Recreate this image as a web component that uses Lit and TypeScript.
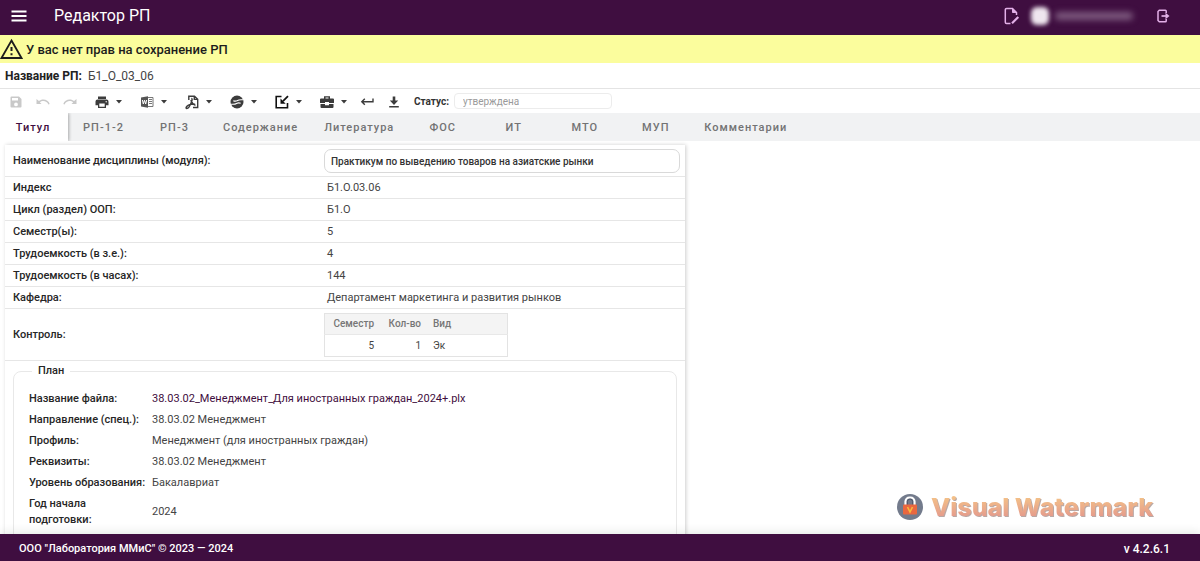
import { LitElement, html, css, svg, nothing, TemplateResult } from "lit";
import { customElement, property } from "lit/decorators.js";
import { classMap } from "lit/directives/class-map.js";

interface Tool {
  label: string;
  icon: TemplateResult;
  menu?: boolean;
  disabled?: boolean;
}

const tools: Tool[] = [
  {
    label: "Сохранить",
    disabled: true,
    icon: svg`<path fill="currentColor" fill-rule="evenodd" d="M3.500 2.500h7.500l2.500 2.500v7.500a1 1 0 0 1-1 1h-9a1 1 0 0 1-1-1v-9a1 1 0 0 1 1-1zM4 4v2.500h6V4zM8 8.500a1.900 1.900 0 1 0 0 3.800 1.900 1.900 0 0 0 0-3.800z"/>`,
  },
  {
    label: "Отменить",
    disabled: true,
    icon: svg`<path fill="currentColor" d="M1.500 5v5h5L4.800 8.200C5.800 7.300 7.100 6.900 8.300 6.900c2.300 0 4.300 1.300 5.100 3.500l1.300-.4C13.800 7.200 11.300 5.500 8.300 5.500c-1.700 0-3.200.6-4.400 1.600z"/>`,
  },
  {
    label: "Повторить",
    disabled: true,
    icon: svg`<path fill="currentColor" d="M14.500 5v5h-5l1.700-1.800C10.200 7.300 8.900 6.900 7.700 6.900c-2.300 0-4.300 1.300-5.100 3.500L1.300 10C2.200 7.200 4.700 5.500 7.700 5.500c1.700 0 3.200.6 4.400 1.600z"/>`,
  },
  {
    label: "Печать",
    menu: true,
    icon: svg`<path fill="currentColor" fill-rule="evenodd" d="M4 2.500h8v2.500H4zM3.500 5.500h9a2 2 0 0 1 2 2v3.800H12v2.700H4v-2.700H1.500V7.500a2 2 0 0 1 2-2zM5.300 9.500v3.200h5.400V9.500zM12.200 7a.7.7 0 1 0 0 1.400.7.700 0 0 0 0-1.400z"/>`,
  },
  {
    label: "Word",
    menu: true,
    icon: svg`<path fill="#555" d="M2 3.500 9 2.200v11.600L2 12.500z"/><path fill="none" stroke="#777" d="M9 3.500h5v9H9M10 5.500h3M10 7.500h3M10 9.500h3"/><path fill="none" stroke="#fff" d="m3.400 6 .9 4 1.200-3.800 1.200 3.800.9-4"/>`,
  },
  {
    label: "PDF",
    menu: true,
    icon: svg`<path fill="none" stroke="currentColor" stroke-width="1.400" d="M4.800 6V2.200h5.700l3.200 3v8.300H9M10.300 2.200v3.200h3.400"/><path fill="none" stroke="currentColor" stroke-width="1.500" d="M7.300 4.500c1.200 0 .8 2 .1 3.700C6.500 10.500 4.500 14.500 2.800 14.500c-1.500 0-.3-2.400 1.700-3.400 2-.9 4.700-1.400 6.500-.9M7 6c.5 2.500 2 4.300 4.500 5.300"/>`,
  },
  {
    label: "Портал",
    menu: true,
    icon: svg`<circle cx="8" cy="8" r="6.500" fill="currentColor"/><path fill="none" stroke="#fff" stroke-width="1.100" d="M14.500 5.700h-2.300c-2 0-3.200.5-4.300 1.100-1.200.6-2.400.4-3.600-.1M1.500 10.300h2.300c2 0 3.200-.5 4.300-1.100 1.200-.6 2.400-.4 3.600.1"/>`,
  },
  {
    label: "Импорт",
    menu: true,
    icon: svg`<path fill="none" stroke="#111" stroke-width="1.600" d="M7.500 2.500H2.200v11.300h11.300V9"/><path fill="none" stroke="#111" stroke-width="1.800" d="m14 2.200-5 5"/><path fill="#111" d="M6.500 4.600v5.200h5.200z"/>`,
  },
  {
    label: "Инструменты",
    menu: true,
    icon: svg`<path fill="currentColor" fill-rule="evenodd" d="M5 4.500v-2.300h6v2.300h3a1 1 0 0 1 1 1V9h-5V8H6v1H1V5.500a1 1 0 0 1 1-1zM6.500 3.600v.9h3v-.9zM1.500 10H6v1.200h4V10h4.500v3a1 1 0 0 1-1 1h-11a1 1 0 0 1-1-1z"/>`,
  },
  {
    label: "Вернуть",
    icon: svg`<path fill="none" stroke="currentColor" stroke-width="1.400" d="M14 4.500v3.200H3M5.800 4.700l-3 3 3 3"/>`,
  },
  {
    label: "Скачать",
    icon: svg`<path fill="currentColor" d="M6.700 2.500h2.600v4h2.900L8 10.900 3.800 6.500h2.900zM3.200 12h9.600v1.500H3.200z"/>`,
  },
];

const tabs = [
  "Титул", "РП-1-2", "РП-3", "Содержание", "Литература",
  "ФОС", "ИТ", "МТО", "МУП", "Комментарии",
];

const fields: [string, string][] = [
  ["Индекс", "Б1.О.03.06"],
  ["Цикл (раздел) ООП:", "Б1.О"],
  ["Семестр(ы):", "5"],
  ["Трудоемкость (в з.е.):", "4"],
  ["Трудоемкость (в часах):", "144"],
  ["Кафедра:", "Департамент маркетинга и развития рынков"],
];

const plan: [string, string][] = [
  ["Название файла:", "38.03.02_Менеджмент_Для иностранных граждан_2024+.plx"],
  ["Направление (спец.):", "38.03.02 Менеджмент"],
  ["Профиль:", "Менеджмент (для иностранных граждан)"],
  ["Реквизиты:", "38.03.02 Менеджмент"],
  ["Уровень образования:", "Бакалавриат"],
  ["Год начала подготовки:", "2024"],
];

@customElement("rp-header")
class RpHeader extends LitElement {
  static styles = css`
    :host {
      display: flex;
      align-items: center;
      height: 35px;
      flex: none;
      padding: 0 23px 3px 5px;
      box-sizing: border-box;
      background: #3f0e40;
      color: #fff;
    }
    .icon-button {
      display: flex;
      justify-content: center;
      width: 28px;
      padding: 0;
      border: 0;
      background: none;
      color: #fff;
    }
    .pink {
      color: #e3b0e8;
    }
    .title {
      margin: 0 auto 0 21px;
      font-size: 16px;
      font-weight: 400;
      line-height: 20px;
    }
    .user {
      display: flex;
      align-items: center;
      gap: 6px;
      margin: 0 16px 0 5px;
    }
    .avatar {
      width: 18px;
      height: 18px;
      border-radius: 6px;
      background: #efe6ef;
      filter: blur(2px);
    }
    .login {
      width: 78px;
      height: 8px;
      border-radius: 4px;
      background: #7d5a7e;
      filter: blur(3px);
    }
  `;
  render() {
    return html`
      <button class="icon-button" aria-label="Меню">
        <svg width="18" height="16" viewBox="0 0 18 16">
          <path stroke="currentColor" stroke-width="1.800" d="M1.500 3.500h15M1.500 8h15M1.500 12.500h15" />
        </svg>
      </button>
      <h1 class="title">Редактор РП</h1>
      <button class="icon-button pink" aria-label="Редактировать">
        <svg width="18" height="20" viewBox="0 0 18 20" fill="none" stroke="currentColor">
          <path stroke-width="1.500" d="M7.500 17.500H3.500a1.200 1.200 0 0 1-1.200-1.200V3.700a1.200 1.200 0 0 1 1.200-1.200H9.500l4 4V9" />
          <path fill="currentColor" d="M9.500 2.500v4h4z" />
          <path stroke-width="2.200" d="m9 17.200 6.300-6.200" />
        </svg>
      </button>
      <span class="user"><span class="avatar"></span><span class="login"></span></span>
      <button class="icon-button pink" aria-label="Выход">
        <svg width="16" height="16" viewBox="0 0 16 16" fill="none" stroke="currentColor">
          <path stroke-width="1.500" d="M11.200 5V3a.8.8 0 0 0-.8-.8H4.300L3 3.500v9l1.300 1.300h6.100a.8.8 0 0 0 .8-.8v-2" />
          <path stroke-width="1.700" d="M6.500 8h5" />
          <path fill="currentColor" stroke="none" d="M10.500 4.800 14.500 8l-4 3.200z" />
        </svg>
      </button>
    `;
  }
}

@customElement("rp-toolbar")
class RpToolbar extends LitElement {
  static styles = css`
    :host {
      display: flex;
      align-items: center;
      flex: none;
      height: 25px;
      padding-left: 4px;
      box-sizing: border-box;
      border-top: 1px solid #e4e4e4;
      font-size: 10px;
    }
    .tool {
      display: flex;
      align-items: center;
      gap: 6px;
      width: 27px;
      height: 24px;
      padding: 2px 0 0 4px;
      box-sizing: border-box;
      border: 0;
      background: none;
      color: #3c3c3c;
    }
    .tool.menu {
      width: 45px;
      padding-left: 9px;
    }
    .tool:disabled {
      color: #c9c9c9;
    }
    .glyph {
      flex: none;
    }
    .status-label {
      margin: 0 5px 0 5px;
      color: #333;
      font-weight: 700;
    }
    .status {
      width: 158px;
      height: 16px;
      padding: 1px 8px 0;
      box-sizing: border-box;
      border: 1px solid #ececec;
      border-radius: 4px;
      background: #fff;
      color: #9a9a9a;
      font: 10px/13px Roboto, sans-serif;
    }
  `;
  render() {
    return html`
      ${tools.map(
        (t) => html`<button
          class=${classMap({ tool: true, menu: !!t.menu })}
          aria-label=${t.label}
          ?disabled=${!!t.disabled}
        >
          <svg class="glyph" width="16" height="16" viewBox="0 0 16 16">${t.icon}</svg>
          ${t.menu
            ? html`<svg class="glyph" width="6" height="4" viewBox="0 0 6 4">
                <path fill="currentColor" d="M0 0h6L3 3.500z" />
              </svg>`
            : nothing}
        </button>`
      )}
      <label class="status-label" for="status">Статус:</label>
      <input class="status" id="status" value="утверждена" disabled />
    `;
  }
}

@customElement("rp-tabs")
class RpTabs extends LitElement {
  @property({ type: Number }) active = 0;
  static styles = css`
    :host {
      display: flex;
      flex: none;
      height: 28px;
      background: #f1f2f3;
    }
    .tab {
      min-width: 71px;
      padding: 1px 13px 0;
      border: 0;
      background: none;
      color: #737373;
      font: 500 11px/27px Roboto, sans-serif;
      letter-spacing: 1px;
    }
    .tab.active {
      min-width: 68px;
      padding-right: 15px;
      background: #fff;
      color: #3f0e40;
      box-shadow: 1px 0 3px rgba(0, 0, 0, 0.3);
      clip-path: inset(0 -4px 0 0);
    }
  `;
  render() {
    return tabs.map(
      (t, i) => html`<button
        role="tab"
        class=${classMap({ tab: true, active: i === this.active })}
        aria-selected=${i === this.active}
        @click=${() => (this.active = i)}
      >${t}</button>`
    );
  }
}

@customElement("rp-title-card")
class RpTitleCard extends LitElement {
  static styles = css`
    :host {
      display: block;
      width: 680px;
      max-width: calc(100% - 10px);
      margin: 4px 0 0 5px;
      box-sizing: border-box;
      background: #fff;
      box-shadow: 1px 0 4px rgba(0, 0, 0, 0.2);
      color: #444;
      font-size: 11px;
      line-height: 16px;
    }
    .row {
      display: grid;
      grid-template-columns: 311px minmax(0, 1fr);
      align-items: center;
      min-height: 22px;
      padding: 0 5px 0 8px;
      box-sizing: border-box;
      border-bottom: 1px solid #e6e6e6;
    }
    .row.tall {
      padding-top: 4px;
      padding-bottom: 3px;
    }
    .name {
      color: #262626;
      font-weight: 500;
    }
    .value {
      padding-left: 3px;
    }
    .discipline {
      width: 100%;
      height: 24px;
      padding: 0 6px;
      box-sizing: border-box;
      border: 1px solid #d9d9d9;
      border-radius: 7px;
      background: #fff;
      color: #333;
      font: 500 10px Roboto, sans-serif;
    }
    .control {
      width: 184px;
      border: 1px solid #e3e3e3;
      border-collapse: collapse;
      table-layout: fixed;
      font-size: 10px;
    }
    .control th,
    .control td {
      height: 20px;
      padding: 0 6px 0 6px;
      font-weight: 400;
      text-align: left;
    }
    .control td {
      height: 21px;
    }
    .control .head {
      background: #f4f4f4;
      color: #777;
      border-bottom: 1px solid #e8e8e8;
    }
    .control .head th {
      font-weight: 500;
    }
    .control .semester {
      width: 43px;
    }
    .control .count {
      width: 35px;
    }
    .control .num {
      text-align: right;
    }
    .plan {
      margin: 2px 8px 0;
      min-width: 0;
      padding: 12px 15px 24px;
      border: 1px solid #e8e8e8;
      border-radius: 8px;
    }
    .legend {
      margin-left: 3px;
      padding: 0 6px;
      color: #262626;
      font-weight: 500;
    }
    .items {
      display: grid;
      grid-template-columns: 118px minmax(0, 1fr);
      column-gap: 5px;
      row-gap: 5px;
      align-items: center;
      margin: 0;
    }
    .items dd {
      margin: 0;
    }
    .link {
      color: #3f0e40;
      text-decoration: none;
    }
  `;
  render() {
    return html`
      <div class="row tall">
        <label class="name" for="discipline">Наименование дисциплины (модуля):</label>
        <input class="discipline" id="discipline" value="Практикум по выведению товаров на азиатские рынки" />
      </div>
      ${fields.map(
        ([name, value]) => html`<div class="row">
          <span class="name">${name}</span><span class="value">${value}</span>
        </div>`
      )}
      <div class="row tall">
        <span class="name">Контроль:</span>
        <table class="control">
          <tr class="head"><th class="num semester">Семестр</th><th class="num count">Кол-во</th><th>Вид</th></tr>
          <tr><td class="num">5</td><td class="num">1</td><td>Эк</td></tr>
        </table>
      </div>
      <fieldset class="plan">
        <legend class="legend">План</legend>
        <dl class="items">
          ${plan.map(
            ([name, value], i) => html`<dt class="name">${name}</dt>
              <dd>${i === 0 ? html`<a class="link" href="#">${value}</a>` : value}</dd>`
          )}
        </dl>
      </fieldset>
    `;
  }
}

@customElement("app-root")
class AppRoot extends LitElement {
  static styles = css`
    :host {
      display: flex;
      flex-direction: column;
      position: relative;
      height: 100vh;
      overflow: hidden;
      background: #fff;
      font-family: Roboto, sans-serif;
      font-size: 12px;
    }
    .warning {
      display: flex;
      align-items: center;
      gap: 3px;
      height: 28px;
      flex: none;
      background: #fbfd9d;
      color: #1c1c1c;
      font-size: 13px;
      font-weight: 500;
    }
    .plan-name {
      display: flex;
      align-items: center;
      gap: 6px;
      height: 25px;
      flex: none;
      padding-left: 5px;
      color: #444;
    }
    .plan-label {
      color: #222;
      font-weight: 700;
    }
    .content {
      flex: 1;
      min-height: 0;
      overflow-y: auto;
      scrollbar-width: none;
    }
    .footer {
      display: flex;
      align-items: center;
      justify-content: space-between;
      flex: none;
      height: 27px;
      padding: 2px 30px 0 19px;
      box-sizing: border-box;
      background: #3f0e40;
      box-shadow: 0 -2px 10px rgba(0, 40, 30, 0.1);
      color: #fff;
      font-size: 11px;
      font-weight: 500;
      z-index: 1;
    }
    .version {
      font-size: 12px;
    }
    .watermark {
      position: absolute;
      right: 47px;
      bottom: 38px;
      display: flex;
      align-items: center;
      gap: 8px;
    }
    .watermark-text {
      background: linear-gradient(#f3c088 20%, #e59c8c 80%);
      background-clip: text;
      -webkit-background-clip: text;
      color: transparent;
      filter: drop-shadow(1px 1px 0 #b9a9a6);
      font: 800 25px/32px Inter, sans-serif;
    }
  `;
  render() {
    return html`
      <rp-header></rp-header>
      <div class="warning" role="alert">
        <svg width="23" height="22" viewBox="0 0 23 22">
          <path fill="none" stroke="#1c1c1c" stroke-width="1.800" d="M11.500 2.500 21.500 20h-20z" />
          <path stroke="#1c1c1c" stroke-width="2" d="M11.500 9v4M11.500 15.200v2" />
        </svg>
        <span>У вас нет прав на сохранение РП</span>
      </div>
      <div class="plan-name"><span class="plan-label">Название РП:</span><span>Б1_О_03_06</span></div>
      <rp-toolbar></rp-toolbar>
      <rp-tabs role="tablist"></rp-tabs>
      <main class="content"><rp-title-card></rp-title-card></main>
      <footer class="footer">
        <span>ООО "Лаборатория ММиС" © 2023 — 2024</span><span class="version">v 4.2.6.1</span>
      </footer>
      <div class="watermark">
        <svg width="26" height="26" viewBox="0 0 26 26">
          <circle cx="13" cy="13" r="13" fill="#737b8c" />
          <path fill="none" stroke="#fff" stroke-width="2.200" d="M8.500 12V7.500a4 4 0 0 1 4-4h1a4 4 0 0 1 4 4V12" />
          <path fill="none" stroke="#4b5265" stroke-width="1" d="M10.300 11V7.500a2.500 2.500 0 0 1 2.500-2.300h.6a2.500 2.500 0 0 1 2.300 2.300V11" />
          <rect x="6" y="10.500" width="14" height="10" rx="1" fill="#e9673f" />
          <path fill="none" stroke="#f7b93e" stroke-width="1.600" d="m10.500 13 2.500 5 2.500-5" />
        </svg>
        <span class="watermark-text">Visual Watermark</span>
      </div>
    `;
  }
}
